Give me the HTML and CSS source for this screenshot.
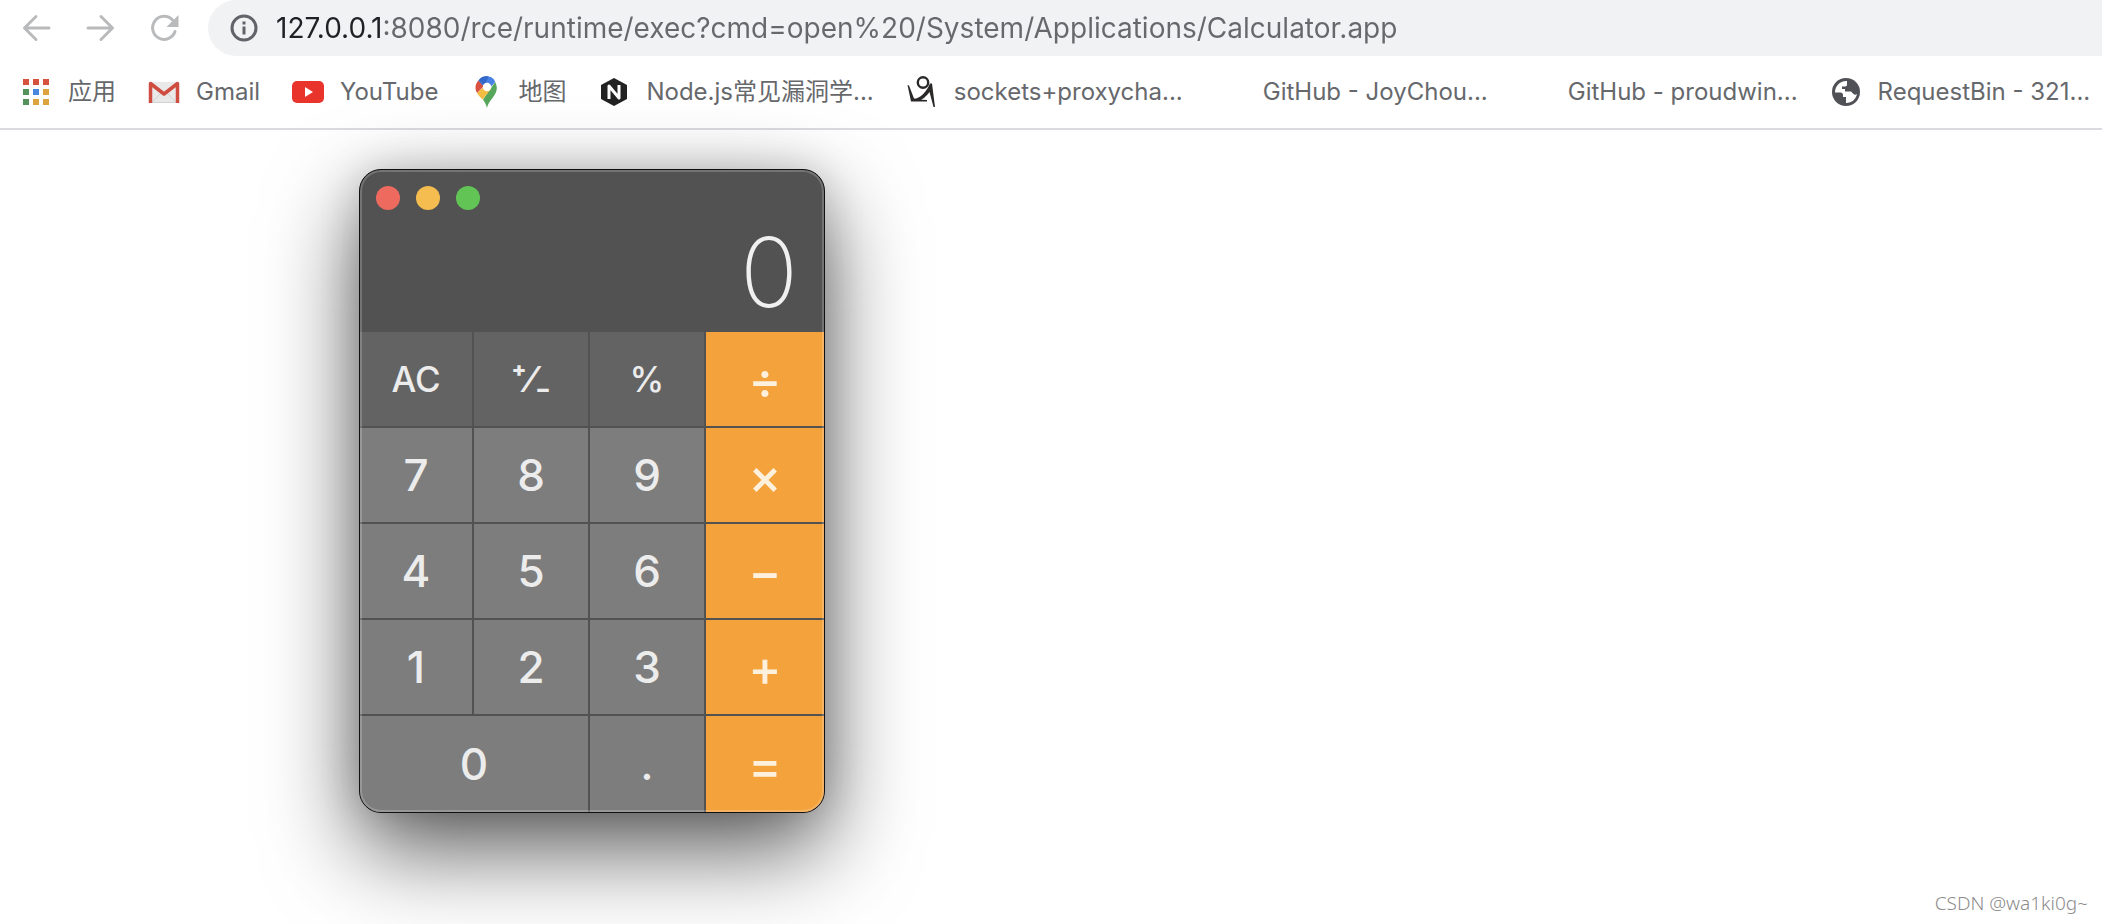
FILE: index.html
```html
<!DOCTYPE html>
<html lang="zh-CN">
  <head>
    <meta charset="UTF-8" />
    <meta name="viewport" content="width=device-width, initial-scale=1.0" />
    <title>127.0.0.1:8080</title>
    <link rel="stylesheet" href="styles.css">
  </head>
  <body>
    <!-- Toolbar -->
    <header class="browser">
      <div class="toolbar">
        <button class="nav-btn" type="button" aria-label="Back">
          <svg viewBox="0 0 32 32"><path d="M29 16H5M16 4.500 4.500 16 16 27.500" /></svg>
        </button>
        <button class="nav-btn" type="button" aria-label="Forward">
          <svg viewBox="0 0 32 32"><path d="M4 16h24M17 4.500 28.500 16 17 27.500" /></svg>
        </button>
        <button class="nav-btn" type="button" aria-label="Reload">
          <svg viewBox="0 0 32 32"><path d="M27 19.500A11.500 11.500 0 1 1 24.500 8" /><path class="solid" d="M30.500 3v12h-12z" /></svg>
        </button>
        <div class="omnibox">
          <svg class="info" viewBox="0 0 28 28"><circle cx="14" cy="14" r="12" /><path d="M14 12.500v8M14 7.500v3" /></svg>
          <input class="url" type="text" aria-label="Address" spellcheck="false" value="127.0.0.1:8080/rce/runtime/exec?cmd=open%20/System/Applications/Calculator.app" />
        </div>
      </div>

      <!-- Bookmarks -->
      <nav class="bookmarks">
        <a class="bookmark" href="#">
          <svg viewBox="0 0 32 32">
            <path fill="#d6523f" d="M3 3h6v6H3zM13 3h6v6h-6zM23 3h6v6h-6z" />
            <path fill="#54945c" d="M3 13h6v6H3zM3 23h6v6H3z" />
            <path fill="#4a86e0" d="M13 13h6v6h-6z" />
            <path fill="#dca33f" d="M23 13h6v6h-6zM13 23h6v6h-6zM23 23h6v6h-6z" />
          </svg>
          <span>应用</span>
        </a>
        <a class="bookmark" href="#">
          <svg viewBox="0 0 32 32">
            <path fill="#e9e9e9" d="M2 6h28v21H2z" />
            <path fill="none" stroke="#d2d2d2" d="M4 26.500 13 17M28 26.500 19 17M5 26.500h22" />
            <path fill="none" stroke="#cf4d40" stroke-width="3.500" stroke-linejoin="round" d="M2.500 27V7.500L16 18 29.500 7.500V27" />
          </svg>
          <span>Gmail</span>
        </a>
        <a class="bookmark" href="#">
          <svg viewBox="0 0 32 32">
            <rect y="5" width="32" height="22" rx="5" fill="#e8342a" />
            <path fill="#fff" d="M13 11v10l8-5z" />
          </svg>
          <span>YouTube</span>
        </a>
        <a class="bookmark" href="#">
          <svg viewBox="0 0 32 32">
            <path fill="#57a65b" d="M25.200 6c3 6 1.500 10-2 15-3 4-5 6-6.200 11-.8-3-1.500-5-4-8.500z" />
            <path fill="#f2bd42" d="M7 17 17 8l4 5-8.500 10.500C10 21 8 19 7 17z" />
            <path fill="#d95140" d="M8.500 4.500c-4 4-3.500 9-1.500 12.500L15 9z" />
            <path fill="#4880e4" d="M8.500 4.500C13-2 23-1 25.200 6L19 13l-6-3z" />
            <path fill="#3568c9" d="M8.500 4.500l6 5 4-9c-4-1-8 .5-10 4z" />
            <circle cx="17" cy="11" r="4.200" fill="#fff" />
          </svg>
          <span>地图</span>
        </a>
        <a class="bookmark" href="#">
          <svg viewBox="0 0 32 32">
            <path fill="#222" d="M16 2l13 7v14l-13 7-13-7V9z" />
            <path fill="none" stroke="#fff" stroke-width="3" stroke-linejoin="round" d="M11 23V10l10 12V9" />
          </svg>
          <span>Node.js常见漏洞学...</span>
        </a>
        <a class="bookmark" href="#">
          <svg viewBox="0 0 32 32">
            <circle cx="17" cy="6.500" r="5.200" fill="none" stroke="#2b2828" stroke-width="2.400" />
            <path fill="#2b2828" d="M1.500 9 3 9.500 8 22.500l4 1 9 .5v1.500H5zM8 23c6-1 12-6 16-15.500h2L29 31h-1.500L23.500 16c-3 4-7 8-12 9z" />
          </svg>
          <span>sockets+proxycha...</span>
        </a>
        <a class="bookmark" href="#">
          <svg viewBox="0 0 32 32"></svg>
          <span>GitHub - JoyChou...</span>
        </a>
        <a class="bookmark" href="#">
          <svg viewBox="0 0 32 32"></svg>
          <span>GitHub - proudwin...</span>
        </a>
        <a class="bookmark" href="#">
          <svg viewBox="0 0 32 32">
            <circle cx="16" cy="16" r="14" fill="#505156" />
            <path fill="#fff" d="M17 5c-7-.5-12 5-12 11.500h5.500c1.500 0 2.500 1 2.500 2.500v2h3v6c6 0 10-4 11-9-1 1-2.500 1-3.500 0l-2.500-2.500H15v-2.500h-3v-2.500h3c2 0 2-1 2-2.500z" />
          </svg>
          <span>RequestBin - 321...</span>
        </a>
      </nav>
    </header>

    <main class="page">
      <!-- Calculator window -->
      <section class="calculator">
        <div class="lights">
          <button class="light red" type="button" aria-label="Close"></button>
          <button class="light yellow" type="button" aria-label="Minimize"></button>
          <button class="light green" type="button" aria-label="Zoom"></button>
        </div>
        <output class="display">0</output>
        <div class="keys">
          <button class="key fn" type="button">AC</button>
          <button class="key fn sign" type="button">⁺⁄₋</button>
          <button class="key fn" type="button">%</button>
          <button class="key op" type="button">÷</button>
          <button class="key" type="button">7</button>
          <button class="key" type="button">8</button>
          <button class="key" type="button">9</button>
          <button class="key op" type="button">×</button>
          <button class="key" type="button">4</button>
          <button class="key" type="button">5</button>
          <button class="key" type="button">6</button>
          <button class="key op" type="button">−</button>
          <button class="key" type="button">1</button>
          <button class="key" type="button">2</button>
          <button class="key" type="button">3</button>
          <button class="key op" type="button">+</button>
          <button class="key zero" type="button">0</button>
          <button class="key" type="button">.</button>
          <button class="key op" type="button">=</button>
        </div>
      </section>
      <p class="watermark">CSDN @wa1ki0g~</p>
    </main>
  </body>
</html>
```
FILE: styles.css
```css
* {
  box-sizing: border-box;
}

body {
  margin: 0;
  min-height: 100vh;
  display: flex;
  flex-direction: column;
  overflow-x: hidden;
  font-family: Inter, "Noto Sans CJK SC", sans-serif;
  background-color: #fff;
}

button {
  padding: 0;
  border: none;
  background: none;
  font-family: inherit;
}

.browser {
  border-bottom: 2px solid #d9dbdf;
}

/* toolbar */
.toolbar {
  display: flex;
  align-items: center;
  gap: 32px;
  padding-left: 20px;
}

.nav-btn {
  width: 32px;
  height: 32px;
}

.nav-btn svg {
  display: block;
  fill: none;
  stroke: #b9babc;
  stroke-width: 3;
  stroke-linecap: round;
  stroke-linejoin: round;
}

.nav-btn .solid {
  fill: #b9babc;
  stroke: none;
}

.omnibox {
  flex: 1;
  display: flex;
  align-items: center;
  gap: 18px;
  height: 56px;
  margin-left: -4px;
  padding-left: 22px;
  border-radius: 28px 0 0 28px;
  background-color: #f1f2f4;
}

.info {
  flex: none;
  width: 28px;
  fill: none;
  stroke: #606367;
  stroke-width: 3;
}

.url {
  flex: 1;
  min-width: 0;
  padding: 0;
  border: none;
  outline: none;
  font-family: inherit;
  font-size: 28px;
  color: transparent;
  /* host is darker than the rest of the address */
  background: linear-gradient(to right, #202124 108px, #66686c 108px);
  -webkit-background-clip: text;
  background-clip: text;
}

/* bookmarks bar */
.bookmarks {
  display: flex;
  align-items: center;
  gap: 32px;
  height: 72px;
  padding: 0 12px 0 20px;
}

.bookmark {
  display: flex;
  align-items: center;
  gap: 16px;
  font-size: 24px;
  line-height: 32px;
  color: #66686c;
  text-decoration: none;
  white-space: nowrap;
}

.bookmark svg {
  flex: none;
  width: 32px;
  height: 32px;
}

/* page */
.page {
  flex: 1;
  display: flex;
  align-items: flex-start;
  justify-content: space-between;
  padding: 39px 14px 8px 359px;
}

.calculator {
  position: relative;
  width: 466px;
  border: 1px solid #111;
  border-radius: 22px;
  overflow: hidden;
  background-color: #525252;
  box-shadow: 0 36px 92px rgba(0, 0, 0, 0.65), 0 0 40px rgba(0, 0, 0, 0.15);
}

/* light rim over the keys */
.calculator::after {
  content: "";
  position: absolute;
  inset: 0;
  border-radius: 21px;
  box-shadow: inset 0 0 0 2px rgba(255, 255, 255, 0.2);
  pointer-events: none;
}

.lights {
  display: flex;
  gap: 16px;
  padding: 16px 16px 0;
}

.light {
  width: 24px;
  height: 24px;
  border-radius: 50%;
}

.red {
  background-color: #ee6a5f;
}

.yellow {
  background-color: #f5bd4f;
}

.green {
  background-color: #62c455;
}

.display {
  display: block;
  height: 122px;
  padding-right: 26px;
  font-size: 96px;
  font-weight: 200;
  line-height: 124px;
  text-align: right;
  color: #f0f0f0;
}

.keys {
  display: grid;
  grid-template-columns: 112fr 114fr 114fr 118fr;
  grid-template-rows: repeat(4, 94px) 96px;
  gap: 2px;
}

.key {
  background-color: #7d7d7d;
  color: #ececec;
  font-size: 44px;
  font-weight: 500;
  line-height: 48px;
}

.fn {
  background-color: #636363;
  font-size: 35px;
}

.sign {
  font-weight: 700;
}

.op {
  padding-top: 2px;
  background-color: #f4a23c;
  color: #fdf0dc;
  font-size: 50px;
}

.zero {
  grid-column: span 2;
}

.watermark {
  align-self: flex-end;
  margin: 0;
  font-family: "Noto Sans", sans-serif;
  font-size: 19px;
  font-weight: 300;
  line-height: 26px;
  color: #8c8c8c;
}
```
